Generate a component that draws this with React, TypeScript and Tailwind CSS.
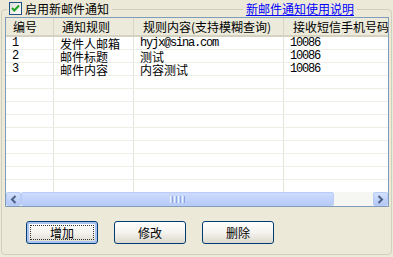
import React from "react";

const cjk = { fontFamily: '"Noto Sans CJK SC", "Noto Sans", sans-serif' };
const mono = { fontFamily: '"Liberation Mono", "DejaVu Sans Mono", monospace' };

const rows = [
  { id: "1", rule: "发件人邮箱", content: "hyjx@sina.com", mono: true, phone: "10086" },
  { id: "2", rule: "邮件标题", content: "测试", mono: false, phone: "10086" },
  { id: "3", rule: "邮件内容", content: "内容测试", mono: false, phone: "10086" },
];

function Check() {
  return (
    <div className="w-[13px] h-[13px] border border-[#1c5180] bg-gradient-to-br from-[#dcdcd7] to-[#ffffff] flex items-center justify-center">
      <svg width="9" height="9" viewBox="0 0 9 9">
        <path d="M1 4 L3.3 6.5 L8 1.5" fill="none" stroke="#21a121" strokeWidth="2" />
      </svg>
    </div>
  );
}

function Chevron({ dir }: { dir: "l" | "r" }) {
  return (
    <svg width="7" height="9" viewBox="0 0 7 9">
      <path
        d={dir === "l" ? "M5.5 1 L2 4.5 L5.5 8" : "M1.5 1 L5 4.5 L1.5 8"}
        fill="none"
        stroke="#4d6185"
        strokeWidth="2"
      />
    </svg>
  );
}

function Btn({ label, focus }: { label: string; focus?: boolean }) {
  return (
    <div
      className={
        "relative w-[72px] h-[23px] rounded-[3px] border border-[#003c74] bg-gradient-to-b from-[#ffffff] via-[#f4f3ee] to-[#dcd8cc] flex items-center justify-center text-[12px] text-black " +
        (focus ? "shadow-[inset_0_0_0_2px_#a9c4f3]" : "")
      }
      style={cjk}
    >
      {focus && <div className="absolute inset-[3px] border border-dotted border-[#333]" />}
      <span className="leading-[14px]">{label}</span>
    </div>
  );
}

export default function App() {
  const body = Array.from({ length: 12 });
  return (
    <div className="w-[393px] h-[257px] bg-[#ece9d8] overflow-hidden pt-[9px] pl-[1px]">
      <div className="w-[391px] h-[246px] border border-[#d0d0bf] rounded-[4px] flex flex-col">
        {/* top bar over the frame line */}
        <div className="-mt-[10px] h-[16px] flex items-center">
          <div className="ml-[5px] px-[2px] bg-[#ece9d8] flex items-center gap-[3px]">
            <Check />
            <span className="text-[12px] leading-[15px] text-black pr-[1px]" style={cjk}>
              启用新邮件通知
            </span>
          </div>
          <div className="ml-auto mr-[34px] px-[3px] bg-[#ece9d8]">
            <span className="text-[12px] leading-[15px] text-[#0000ff] underline" style={cjk}>
              新邮件通知使用说明
            </span>
          </div>
        </div>

        {/* list view */}
        <div className="mt-[1px] ml-[3px] w-[384px] h-[190px] border border-[#7f9db9] bg-white flex flex-col overflow-hidden">
          <div className="h-[19px] shrink-0 flex bg-[#ebeadb] border-b-2 border-[#d6d2c2] text-[12px] text-black" style={cjk}>
            <div className="w-[48px] shrink-0 pl-[7px] border-r border-[#d8d5c6] leading-[18px]">编号</div>
            <div className="w-[80px] shrink-0 pl-[8px] border-r border-[#d8d5c6] leading-[18px]">通知规则</div>
            <div className="w-[150px] shrink-0 pl-[9px] border-r border-[#d8d5c6] leading-[18px] whitespace-nowrap">
              规则内容(支持模糊查询)
            </div>
            <div className="flex-1 pl-[9px] leading-[18px] whitespace-nowrap overflow-hidden">接收短信手机号码</div>
          </div>
          <div className="flex-1 overflow-hidden">
            {body.map((_, i) => {
              const r = rows[i];
              return (
                <div key={i} className="h-[13px] flex border-b border-[#efeee6] text-[12px] text-black">
                  <div className="w-[48px] shrink-0 pl-[6px] border-r border-[#e6e4d8] leading-[13px] text-[12px] tracking-[-1.2px]" style={mono}>
                    {r ? r.id : ""}
                  </div>
                  <div className="w-[80px] shrink-0 pl-[6px] border-r border-[#e6e4d8] leading-[13px] whitespace-nowrap" style={cjk}>
                    {r ? r.rule : ""}
                  </div>
                  <div
                    className={
                      "w-[150px] shrink-0 pl-[6px] border-r border-[#e6e4d8] leading-[13px] whitespace-nowrap " +
                      (r && r.mono ? "text-[12px] tracking-[-1.2px]" : "")
                    }
                    style={r && r.mono ? mono : cjk}
                  >
                    {r ? r.content : ""}
                  </div>
                  <div className="flex-1 pl-[6px] leading-[13px] text-[12px] tracking-[-1.2px]" style={mono}>
                    {r ? r.phone : ""}
                  </div>
                </div>
              );
            })}
          </div>
          {/* horizontal scrollbar */}
          <div className="h-[14px] shrink-0 flex bg-[#f6f6f2]">
            <div className="w-[15px] h-full rounded-[2px] border border-[#b7cbf6] bg-gradient-to-b from-[#d3e0fd] to-[#b4c8f6] flex items-center justify-center">
              <Chevron dir="l" />
            </div>
            <div className="w-[313px] h-full rounded-[2px] border border-[#b9cdf8] bg-gradient-to-b from-[#cddbfd] to-[#b7cbf8] flex items-center justify-center gap-[1px]">
              <div className="w-[1px] h-[7px] bg-[#eef3fe]" />
              <div className="w-[1px] h-[7px] bg-[#8ca6e0]" />
              <div className="w-[1px] h-[7px] bg-[#eef3fe]" />
              <div className="w-[1px] h-[7px] bg-[#8ca6e0]" />
              <div className="w-[1px] h-[7px] bg-[#eef3fe]" />
              <div className="w-[1px] h-[7px] bg-[#8ca6e0]" />
              <div className="w-[1px] h-[7px] bg-[#eef3fe]" />
              <div className="w-[1px] h-[7px] bg-[#8ca6e0]" />
            </div>
            <div className="flex-1" />
            <div className="w-[15px] h-full rounded-[2px] border border-[#b7cbf6] bg-gradient-to-b from-[#d3e0fd] to-[#b4c8f6] flex items-center justify-center">
              <Chevron dir="r" />
            </div>
          </div>
        </div>

        {/* buttons */}
        <div className="mt-[14px] pl-[24px] flex gap-[16px]">
          <Btn label="增加" focus />
          <Btn label="修改" />
          <Btn label="删除" />
        </div>
      </div>
    </div>
  );
}
